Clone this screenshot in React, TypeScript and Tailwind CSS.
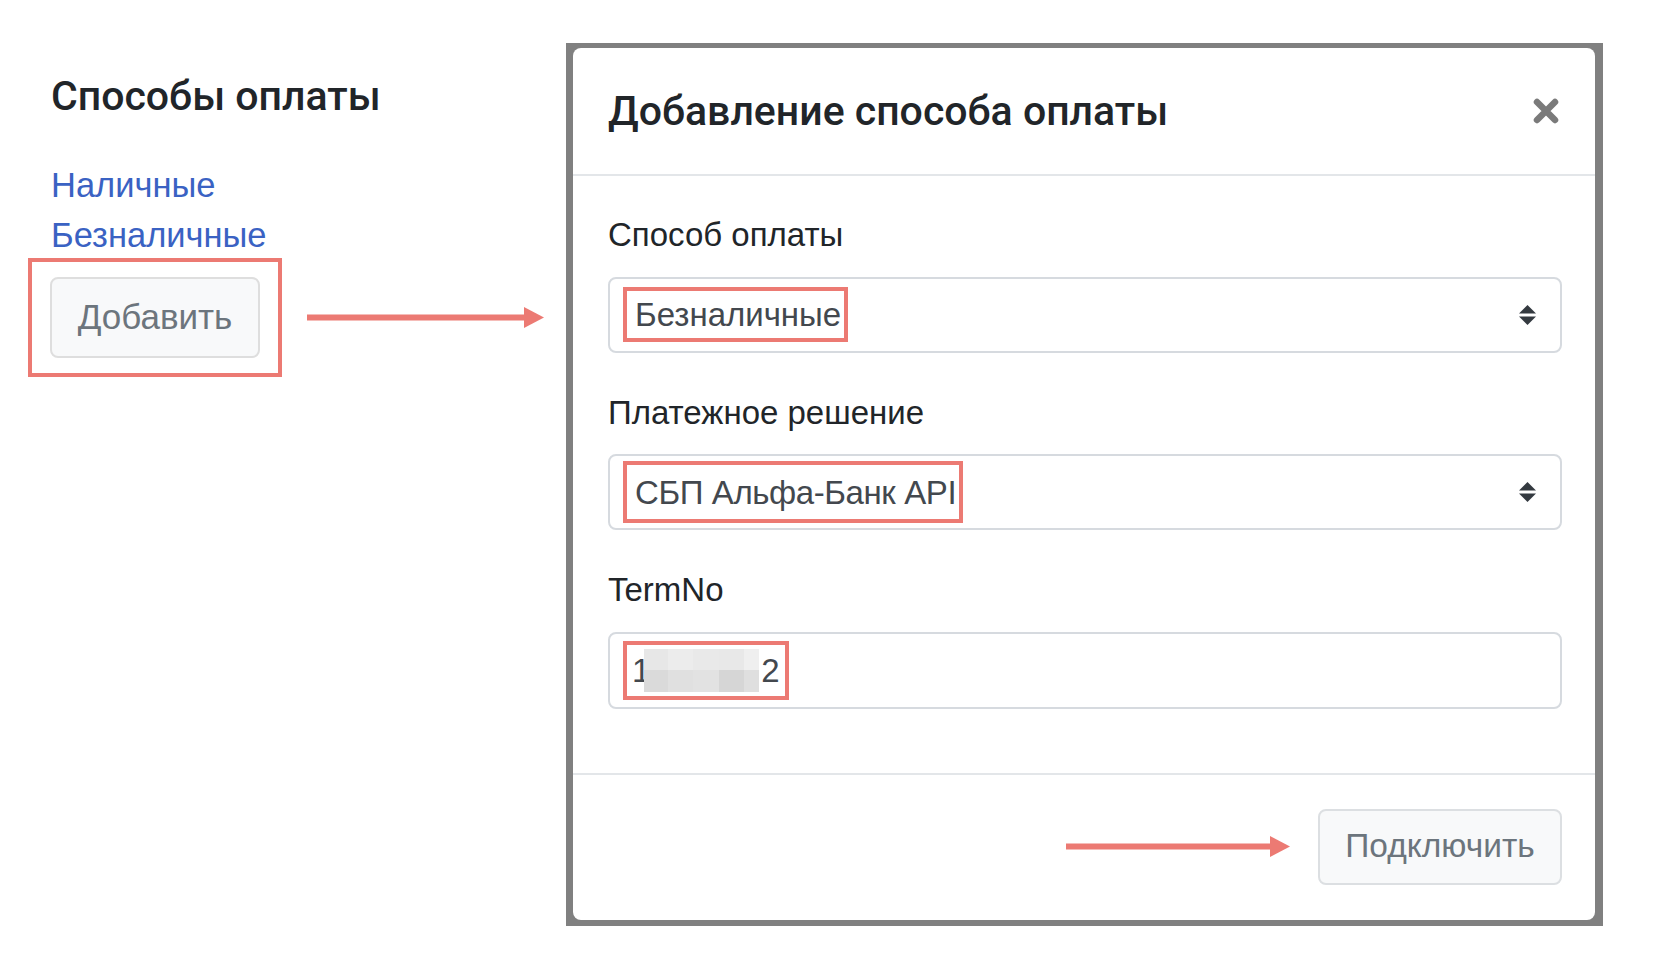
import React from 'react';

const RED = '#ec7a73';

function Arrow({ width }: { width: number }) {
  return (
    <svg width={width} height={21} viewBox={`0 0 ${width} 21`} className="shrink-0">
      <rect x={0} y={7.5} width={width - 18} height={6} fill={RED} />
      <polygon points={`${width - 20},0 ${width},10.5 ${width - 20},21`} fill={RED} />
    </svg>
  );
}

function UpDown() {
  return (
    <svg width="17" height="20" viewBox="0 0 17 20" className="shrink-0">
      <polygon points="8.5,0 17,8.5 0,8.5" fill="#343a40" />
      <polygon points="0,11.5 17,11.5 8.5,20" fill="#343a40" />
    </svg>
  );
}

function CloseIcon() {
  return (
    <svg width="26" height="26" viewBox="0 0 26 26">
      <path d="M4 4L22 22M22 4L4 22" stroke="#7a7a7a" strokeWidth="6.5" strokeLinecap="round" />
    </svg>
  );
}

// pixelated blur over the hidden digits
const blurCells = [
  '#e7e7e7', '#ececec', '#e9e9e9', '#e8e8e8', '#efefef',
  '#dadada', '#e0e0e0', '#e2e2e2', '#d6d6d6', '#dfdfdf',
];

function Blurred() {
  return (
    <div className="-ml-[6px] grid h-[43px] w-[115px] grid-cols-[24px_25px_26px_25px_15px] grid-rows-2">
      {blurCells.map((c, i) => (
        <div key={i} style={{ backgroundColor: c }} />
      ))}
    </div>
  );
}

function Field({
  label,
  children,
  last,
}: {
  label: string;
  children: React.ReactNode;
  last?: boolean;
}) {
  return (
    <div className={last ? '' : 'mb-[35px]'}>
      <div className="mb-[17px] text-[33px] leading-[49.5px] text-[#212529]">{label}</div>
      {children}
    </div>
  );
}

function Select({ value, tall }: { value: string; tall?: boolean }) {
  return (
    <div className="flex h-[76px] items-center justify-between rounded-[8px] border-2 border-[#d6dadf] bg-white pl-[13px] pr-[24px]">
      <div
        className={`flex items-center border-4 border-[#ec7a73] pl-[8px] pr-[3px] ${
          tall ? 'h-[62px] tracking-[-0.4px]' : 'h-[55px]'
        }`}
      >
        <span className="text-[33px] leading-none text-[#43484e]">{value}</span>
      </div>
      <UpDown />
    </div>
  );
}

export default function App() {
  return (
    <div className="flex min-h-[964px] items-start bg-white pl-[28px] pt-[43px] font-['Liberation_Sans',Arial,sans-serif]">
      {/* left page */}
      <div className="flex w-[517px] flex-col pt-[27px]">
        <h4 className="ml-[23px] font-['Roboto',sans-serif] text-[41px] font-medium leading-[52px] text-[#212529]">
          Способы оплаты
        </h4>
        <div className="ml-[23px] mt-[38px] flex flex-col text-[34.5px] leading-[50px] text-[#3a62c3]">
          <a className="w-fit">Наличные</a>
          <a className="w-fit">Безналичные</a>
        </div>
        <div className="-mt-[2px] flex items-center">
          <div className="border-4 border-[#ec7a73] px-[18px] py-[15px]">
            <button className="flex h-[81px] w-[210px] items-center justify-center rounded-[8px] border-2 border-[#dedede] bg-[#f8f9fa] text-[35px] text-[#6c757d]">
              Добавить
            </button>
          </div>
          <div className="ml-[25px]">
            <Arrow width={237} />
          </div>
        </div>
      </div>

      {/* modal */}
      <div className="ml-[21px] w-[1037px] bg-[#808080] pb-[6px] pl-[7px] pr-[8px] pt-[5px]">
        <div className="rounded-[8px] bg-white">
          <div className="flex h-[128px] items-center justify-between border-b-2 border-[#e3e6e9] pl-[35px] pr-[36px]">
            <h5 className="font-['Roboto',sans-serif] text-[41px] font-medium leading-[62px] text-[#212529]">
              Добавление способа оплаты
            </h5>
            <CloseIcon />
          </div>

          <div className="pb-[64px] pl-[35px] pr-[33px] pt-[34px]">
            <Field label="Способ оплаты">
              <Select value="Безналичные" />
            </Field>
            <Field label="Платежное решение">
              <Select value="СБП Альфа-Банк API" tall />
            </Field>
            <Field label="TermNo" last>
              <div className="flex h-[77px] items-center rounded-[8px] border-2 border-[#d6dadf] bg-white pl-[13px]">
                <div className="flex h-[59px] items-center border-4 border-[#ec7a73] pl-[5px] pr-[5px]">
                  <span className="text-[33px] leading-none text-[#43484e]">1</span>
                  <Blurred />
                  <span className="ml-[2px] text-[33px] leading-none text-[#43484e]">2</span>
                </div>
              </div>
            </Field>
          </div>

          <div className="flex items-center justify-end border-t-2 border-[#e3e6e9] pb-[35px] pr-[33px] pt-[34px]">
            <Arrow width={224} />
            <button className="ml-[28px] flex h-[76px] w-[244px] items-center justify-center rounded-[8px] border-2 border-[#dcdfe2] bg-[#f8f9fa] text-[33.5px] text-[#6c757d]">
              Подключить
            </button>
          </div>
        </div>
      </div>
    </div>
  );
}
